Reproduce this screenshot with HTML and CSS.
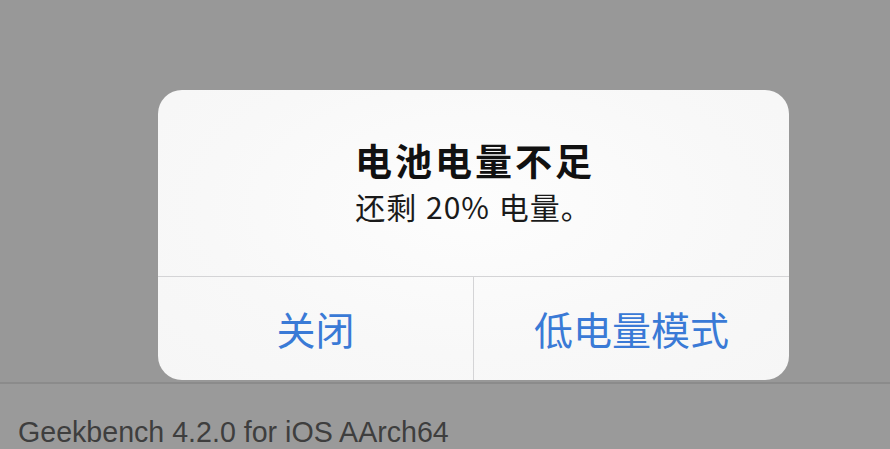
FILE: index.html
```html
<!doctype html>
<html lang="zh-CN">
<head>
<meta charset="UTF-8">
<meta name="viewport" content="width=device-width, initial-scale=1">
<title>电池电量不足</title>
<link rel="stylesheet" href="styles.css">
</head>
<body>
<div id="screen">
    <div class="top-area"></div>
    <div class="info-row">Geekbench 4.2.0 for iOS AArch64</div>

    <!-- Low battery alert -->
    <div class="alert">
        <div class="alert-body">
            <div class="alert-title">电池电量不足</div>
            <div class="alert-message">还剩 20% 电量。</div>
        </div>
        <div class="alert-actions">
            <div class="alert-button">关闭</div>
            <div class="alert-button">低电量模式</div>
        </div>
    </div>
</div>
</body>
</html>
```

FILE: styles.css
```css
body {
    margin: 0;
    padding: 0;
    width: 890px;
    height: 449px;
    overflow: hidden;
    background: #9a9a9a;
    font-family: "Noto Sans CJK SC", sans-serif;
}

#screen {
    position: relative;
    width: 890px;
    height: 449px;
}

.top-area {
    height: 384px;
    background: #989898;
    border-bottom: 2px solid #8b8b8b;
    box-sizing: border-box;
}

.info-row {
    padding: 33px 0 0 18px;
    font-family: "Liberation Sans", Arial, sans-serif;
    font-size: 28.6px;
    color: #3e3e3e;
    line-height: 30px;
}

.alert {
    position: absolute;
    left: 158px;
    top: 90px;
    width: 631px;
    height: 290px;
    border-radius: 24px;
    background: radial-gradient(ellipse at 50% 40%, #fdfdfd 0%, #f8f8f8 60%, #f6f6f6 100%);
    display: flex;
    flex-direction: column;
    overflow: hidden;
}

.alert-body {
    height: 187px;
    display: flex;
    flex-direction: column;
    align-items: center;
    padding-top: 44px;
    box-sizing: border-box;
    border-bottom: 1px solid #d4d4d6;
}

.alert-title {
    font-size: 37px;
    font-weight: 700;
    letter-spacing: 3px;
    margin-left: 3px;
    color: #111;
    line-height: 52px;
}

.alert-message {
    font-size: 30px;
    color: #1a1a1a;
    line-height: 38px;
    letter-spacing: 1px;
    word-spacing: 1px;
    margin-top: 1px;
}

.alert-actions {
    flex: 1;
    display: flex;
}

.alert-button {
    flex: 1;
    display: flex;
    align-items: center;
    justify-content: center;
    font-size: 39px;
    color: #3a7ad6;
    padding-bottom: 2px;
}

.alert-button + .alert-button {
    border-left: 1px solid #d4d4d6;
}
```
